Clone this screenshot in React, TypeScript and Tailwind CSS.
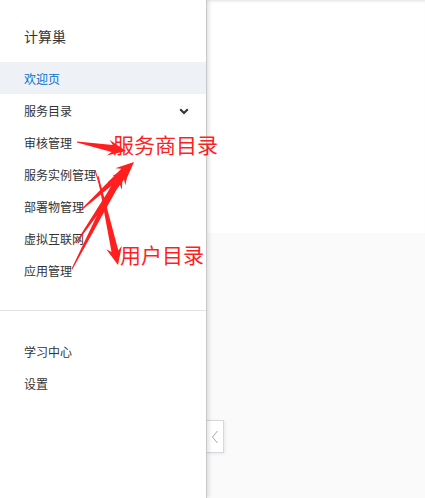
import React from "react";

const font = { fontFamily: '"Noto Sans CJK SC", "Noto Sans", sans-serif' };

const items = ["审核管理", "服务实例管理", "部署物管理", "虚拟互联网", "应用管理"];

const Arrow = ({ tail, tip }: { tail: [number, number]; tip: [number, number] }) => {
  const dx = tip[0] - tail[0];
  const dy = tip[1] - tail[1];
  const len = Math.hypot(dx, dy);
  const ux = dx / len;
  const uy = dy / len;
  const px = -uy;
  const py = ux;
  const b = len - 14;
  const bx = tail[0] + ux * b;
  const by = tail[1] + uy * b;
  const pts = [
    [tail[0] + px * 0.5, tail[1] + py * 0.5],
    [bx + px * 3.5, by + py * 3.5],
    [bx + px * 8 - ux * 4, by + py * 8 - uy * 4],
    [tip[0], tip[1]],
    [bx - px * 8 - ux * 4, by - py * 8 - uy * 4],
    [bx - px * 3.5, by - py * 3.5],
    [tail[0] - px * 0.5, tail[1] - py * 0.5],
  ]
    .map((p) => p.join(","))
    .join(" ");
  return <polygon points={pts} fill="#ff1f1f" />;
};

export default function App() {
  return (
    <div className="relative flex h-[498px] w-[425px] overflow-hidden bg-white" style={font}>
      <div className="absolute left-0 top-0 h-[1px] w-[50px] bg-[#ff6a00]" />
      <aside className="relative z-10 flex w-[207px] shrink-0 flex-col border-r border-[#c8c8c8] bg-white shadow-[2px_0_4px_rgba(0,0,0,0.12)]">
        <div className="flex h-[62px] items-center pl-6 pt-[10px] text-[14px] text-[#333]">计算巢</div>
        <div className="flex h-[32px] items-center bg-[#eef1f6] pl-6 pt-[1px] text-[12px] text-[#0070cc]">欢迎页</div>
        <div className="flex h-[32px] items-center justify-between pl-6 pr-[17px] pt-[2px] text-[12px] text-[#333]">
          <span>服务目录</span>
          <svg width="10" height="7" viewBox="0 0 10 7">
            <path d="M1.2 1.2 L5 5 L8.8 1.2" fill="none" stroke="#333" strokeWidth="2" />
          </svg>
        </div>
        {items.map((t) => (
          <div key={t} className="flex h-[32px] items-center pl-6 pt-[2px] text-[12px] text-[#333]">
            {t}
          </div>
        ))}
        <div className="mt-[24px] border-t border-[#e3e3e3]" />
        <div className="h-[24px]" />
        <div className="flex h-[32px] items-center pl-6 pt-[2px] text-[12px] text-[#333]">学习中心</div>
        <div className="flex h-[32px] items-center pl-6 pt-[2px] text-[12px] text-[#333]">设置</div>
      </aside>
      <main className="flex flex-1 flex-col">
        <div className="h-[233px] bg-white shadow-[inset_0_3px_3px_-2px_rgba(0,0,0,0.12)]" />
        <div className="flex-1 bg-[#fafafa]">
          <div className="mt-[187px] flex h-[33px] w-[17px] items-center justify-center border border-l-0 border-[#d5d8de] bg-white shadow-[1px_1px_3px_rgba(0,0,0,0.08)]">
            <svg width="8" height="14" viewBox="0 0 8 14">
              <path d="M6.5 1 L1.5 7 L6.5 13" fill="none" stroke="#aaa" strokeWidth="1" />
            </svg>
          </div>
        </div>
      </main>
      <svg className="pointer-events-none absolute left-0 top-0 z-20" width="425" height="498">
        <Arrow tail={[77, 142]} tip={[126, 151]} />
        <Arrow tail={[80, 211]} tip={[134, 162]} />
        <Arrow tail={[76, 243]} tip={[129, 166]} />
        <Arrow tail={[72, 269]} tip={[123, 170]} />
        <Arrow tail={[98, 176]} tip={[118, 265]} />
        <line x1="95" y1="170" x2="101" y2="190" stroke="#ff1f1f" strokeWidth="1" />
      </svg>
      <div className="absolute left-[113px] top-[134px] z-30 text-[21px] leading-none text-[#ff1f1f]">服务商目录</div>
      <div className="absolute left-[120px] top-[244px] z-30 text-[21px] leading-none text-[#ff1f1f]">用户目录</div>
    </div>
  );
}
